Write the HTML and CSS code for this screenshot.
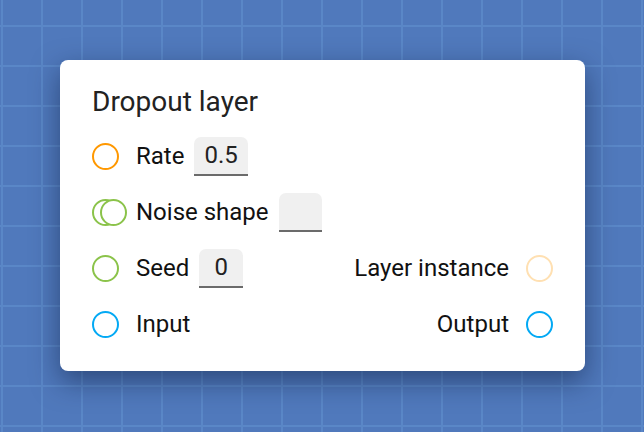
FILE: index.html
```html
<!DOCTYPE html>
<html>
<head>
<meta charset="utf-8">
<link rel="stylesheet" href="styles.css">
</head>
<body>
<div class="canvas">
  <div class="node">
    <div class="title">Dropout layer</div>
    <div class="row">
      <div class="side">
        <span class="port port-orange"></span>
        <span class="label">Rate</span>
        <span class="field">0.5</span>
      </div>
    </div>
    <div class="row">
      <div class="side">
        <span class="port-multi"><span class="port port-green"></span><span class="port port-green port-over"></span></span>
        <span class="label">Noise shape</span>
        <span class="field field-empty"></span>
      </div>
    </div>
    <div class="row">
      <div class="side">
        <span class="port port-green"></span>
        <span class="label">Seed</span>
        <span class="field">0</span>
      </div>
      <div class="side">
        <span class="label">Layer instance</span>
        <span class="port port-peach"></span>
      </div>
    </div>
    <div class="row">
      <div class="side">
        <span class="port port-blue"></span>
        <span class="label">Input</span>
      </div>
      <div class="side">
        <span class="label">Output</span>
        <span class="port port-blue"></span>
      </div>
    </div>
  </div>
</div>
</body>
</html>
```

FILE: styles.css
```css
html, body {
  margin: 0;
  padding: 0;
}
body {
  width: 644px;
  height: 432px;
  overflow: hidden;
  font-family: Roboto, "Noto Sans", sans-serif;
}
.canvas {
  width: 644px;
  height: 432px;
  box-sizing: border-box;
  padding: 60px 0 0 60px;
  background-color: #5079bc;
  background-image:
    linear-gradient(to right, #5a87c7 2px, transparent 2px),
    linear-gradient(to bottom, #5a87c7 2px, transparent 2px);
  background-size: 40px 40px;
  background-position: 1px 25px;
}
.node {
  width: 525px;
  height: 311px;
  box-sizing: border-box;
  background: #fff;
  border-radius: 8px;
  box-shadow: 0 10px 28px rgba(10, 25, 60, 0.5);
  padding: 24px 32px 0 32px;
  display: flex;
  flex-direction: column;
  gap: 16px;
}
.title {
  font-size: 28px;
  line-height: 36px;
  color: #222;
}
.row {
  height: 40px;
  display: flex;
  align-items: center;
  justify-content: space-between;
}
.side {
  display: flex;
  align-items: center;
}
.label {
  font-size: 24px;
  color: #111;
}
.port {
  width: 23px;
  height: 23px;
  border-radius: 50%;
  border: 2px solid;
  box-sizing: content-box;
  flex: none;
}
.side .port:first-child {
  margin-right: 17px;
}
.side .label + .port {
  margin-left: 17px;
}
.port-orange { border-color: #ff9800; }
.port-green { border-color: #8bc34a; }
.port-blue { border-color: #03a9f4; }
.port-peach { border-color: #ffe0b2; }
.port-multi {
  position: relative;
  width: 27px;
  height: 27px;
  margin-right: 17px;
  flex: none;
}
.port-multi .port {
  position: absolute;
  left: 0;
  top: 0;
}
.port-multi .port-over {
  left: 8px;
  background: #fff;
}
.field {
  margin-left: 10px;
  height: 39px;
  box-sizing: border-box;
  padding: 0 10px;
  background: #f0f0f0;
  border-radius: 7px 7px 0 0;
  border-bottom: 2px solid #6b6b6b;
  font-size: 24px;
  line-height: 37px;
  color: #222;
  min-width: 44px;
  text-align: center;
}
.field-empty {
  width: 43px;
  min-width: 43px;
}
```
